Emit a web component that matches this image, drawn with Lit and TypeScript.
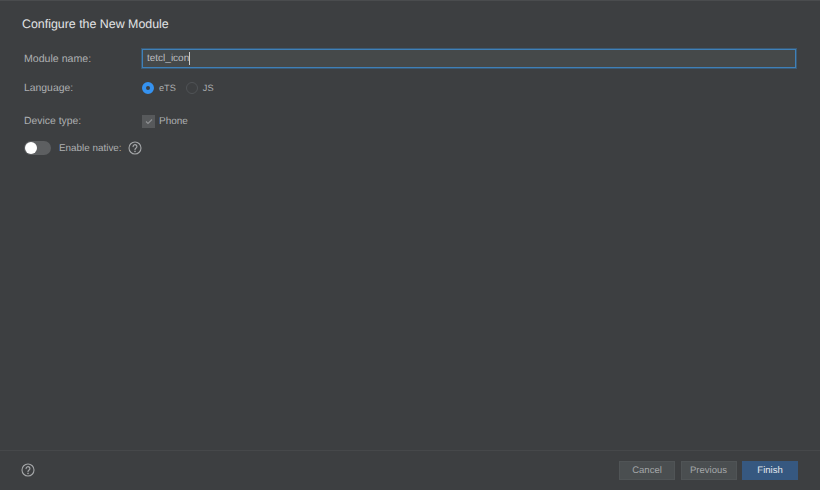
import { LitElement, html, css } from "lit";
import { customElement } from "lit/decorators.js";

const help = (cls: string) => html`<svg class=${cls} width="14" height="14" viewBox="0 0 14 14" fill="none">
  <circle cx="7" cy="7" r="6" stroke="#a4a6a8" stroke-width="1.1"/>
  <path d="M5.1 5.6a1.9 1.9 0 1 1 3 1.5c-.7.5-1.1.8-1.1 1.6" stroke="#a4a6a8" stroke-width="1.2" stroke-linecap="round"/>
  <circle cx="7" cy="10.5" r=".8" fill="#a4a6a8"/>
</svg>`;

@customElement("app-root")
export class AppRoot extends LitElement {
  static styles = css`
    :host {
      display: flex;
      flex-direction: column;
      width: 820px;
      height: 490px;
      box-sizing: border-box;
      background: #3d3f41;
      border-top: 1px solid #4a4c4e;
      font-family: "Liberation Sans", Arial, sans-serif;
      font-size: 10.4px;
      color: #aeb0b2;
      text-rendering: geometricPrecision;
    }
    .main { flex: 1; display: flex; flex-direction: column; padding: 0 24px; }
    h1 {
      margin: 15px 0 0 -2px;
      height: 16px;
      line-height: 16px;
      font-size: 12.4px;
      font-weight: 400;
      color: #e2e3e5;
    }
    .row { display: grid; grid-template-columns: 118px 1fr; align-items: center; }
    .r1 { margin-top: 17px; height: 19px; }
    .r2 { margin-top: 11px; height: 18px; }
    .r3 { margin-top: 15px; height: 19px; }
    .name { font-size: 10.6px; }
    .input {
      height: 19px;
      box-sizing: border-box;
      border: 1px solid #3f80b8;
      box-shadow: 0 0 0 1px #3a5a75;
      background: #45494a;
      color: #bcbec0;
      font-size: 10px;
      padding-left: 4px;
      display: flex;
      align-items: center;
    }
    .caret { width: 1px; height: 13px; background: #c8cacc; }
    .opts { display: flex; align-items: center; }
    .radio { width: 12px; height: 12px; border-radius: 50%; box-sizing: border-box; flex: none; }
    .radio.on { border: 4px solid #3592f0; background: #3d3f41; }
    .radio.off { border: 1px solid #505356; margin-left: 10px; }
    .lab { margin-left: 5px; font-size: 9.2px; }
    .check {
      width: 13px; height: 13px; background: #57595b; flex: none;
      display: flex; align-items: center; justify-content: center;
    }
    .phone { margin-left: 4px; font-size: 10px; }
    .native { display: flex; align-items: center; margin-top: 8px; height: 18px; }
    .toggle {
      width: 27px; height: 14px; border-radius: 7px; background: #5d5f61;
      display: flex; align-items: center; flex: none;
    }
    .knob { width: 12px; height: 12px; border-radius: 50%; background: #fff; margin-left: 1px; }
    .native span { margin-left: 8px; font-size: 9.9px; }
    .q1 { margin-left: 6px; }
    footer {
      height: 40px;
      box-sizing: border-box;
      border-top: 1px solid #46484a;
      display: flex;
      align-items: center;
      padding: 0 22px 0 21px;
    }
    .q2 { margin-top: -1px; }
    .spacer { flex: 1; }
    .btns { display: flex; gap: 5.5px; }
    .btn {
      width: 56px; height: 19px; box-sizing: border-box;
      border: 1px solid #505456;
      background: #4a4e50;
      color: #a4a7a9;
      font-size: 9.5px;
      display: flex; align-items: center; justify-content: center;
    }
    .btn.primary { background: #365880; border-color: #365880; color: #e4e8ee; }
  `;

  render() {
    return html`
      <div class="main">
        <h1>Configure the New Module</h1>
        <div class="row r1">
          <div class="name">Module name:</div>
          <div class="input">tetcl_icon<i class="caret"></i></div>
        </div>
        <div class="row r2">
          <div>Language:</div>
          <div class="opts">
            <i class="radio on"></i><span class="lab">eTS</span>
            <i class="radio off"></i><span class="lab">JS</span>
          </div>
        </div>
        <div class="row r3">
          <div>Device type:</div>
          <div class="opts">
            <i class="check"><svg width="8" height="7" viewBox="0 0 8 7" fill="none"><path d="M1 3.5l2 2L7 1.5" stroke="#8f9193" stroke-width="1.1"/></svg></i>
            <span class="phone">Phone</span>
          </div>
        </div>
        <div class="native">
          <i class="toggle"><i class="knob"></i></i>
          <span>Enable native:</span>
          ${help("q1")}
        </div>
      </div>
      <footer>
        ${help("q2")}
        <div class="spacer"></div>
        <div class="btns">
          <div class="btn">Cancel</div>
          <div class="btn">Previous</div>
          <div class="btn primary">Finish</div>
        </div>
      </footer>
    `;
  }
}
